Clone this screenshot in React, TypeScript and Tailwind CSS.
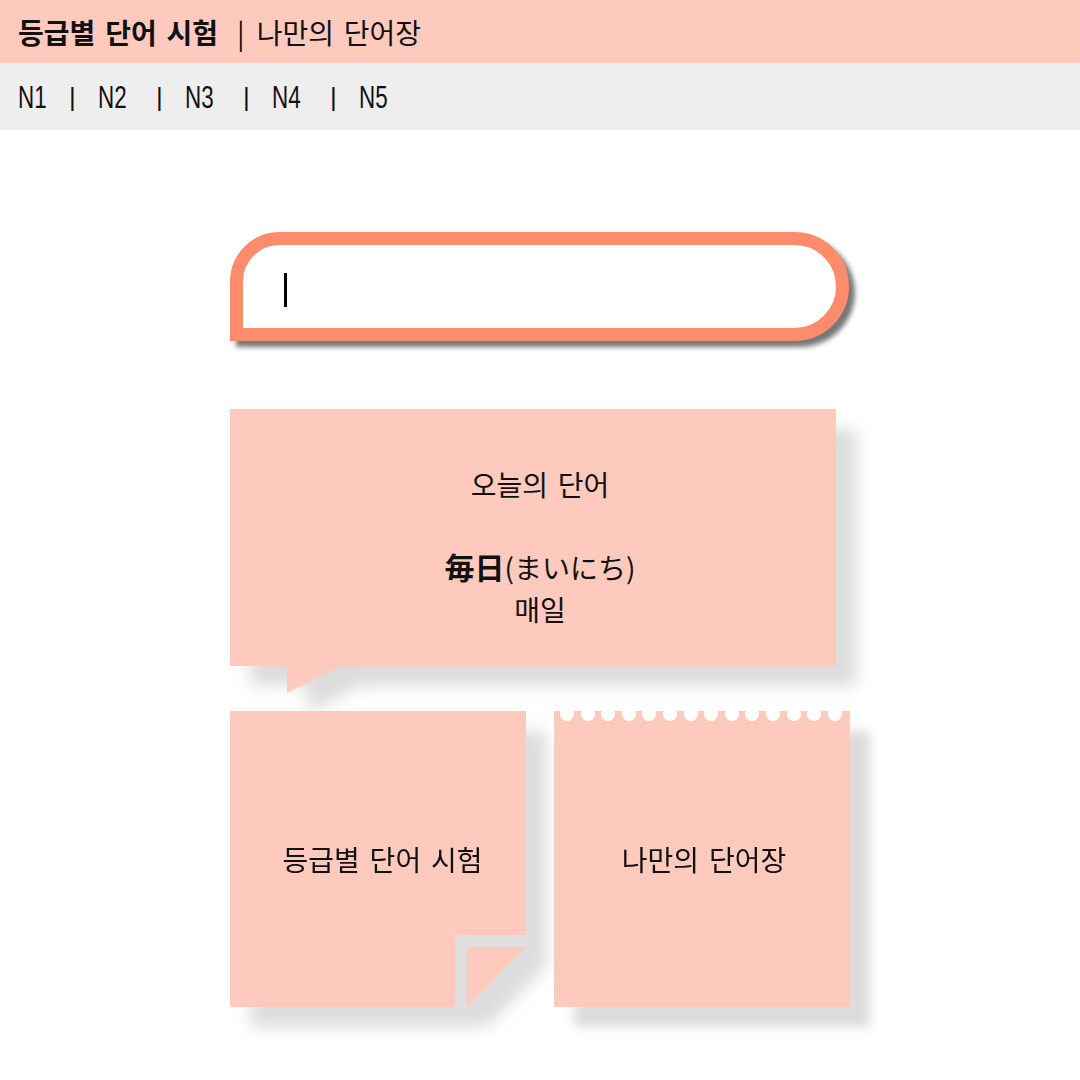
const LEVELS = ["N1", "N2", "N3", "N4", "N5"];

function Scallops() {
  return (
    <div className="absolute left-[6px] -top-[4px] flex gap-[6.6px]">
      {Array.from({ length: 14 }).map((_, i) => (
        <div key={i} className="w-[14px] h-[14px] rounded-full bg-white" />
      ))}
    </div>
  );
}

export default function App() {
  return (
    <div className="min-h-screen bg-white text-[#111] font-['Noto_Sans_CJK_KR','Noto_Sans_CJK_JP',sans-serif] [word-spacing:0.22em]">
      {/* Top menu */}
      <header className="h-[63px] bg-[#fecabd] flex items-center pl-[18px] text-[28px] leading-none">
        <span className="font-bold">등급별 단어 시험</span>
        <span className="ml-[19px] mr-[12px]">|</span>
        <span>나만의 단어장</span>
      </header>

      {/* Level tabs */}
      <nav className="h-[67px] bg-[#eeeeee] flex items-center pl-[18px] text-[32px] leading-none font-['Liberation_Sans',sans-serif] [word-spacing:0]">
        {LEVELS.map((lv, i) => (
          <div key={lv} className="flex items-center">
            {i > 0 && <span className="w-[29px] text-[26px]">|</span>}
            <span className={i === 0 ? "w-[51px]" : i === 4 ? "" : "w-[58px]"}>
              <span className="inline-block origin-left scale-x-[0.7]">{lv}</span>
            </span>
          </div>
        ))}
      </nav>

      <main className="w-[620px] mx-auto flex flex-col">
        {/* Search box */}
        <div className="mt-[102px] w-[619px] h-[109px] border-[13px] border-[#fe8b6b] bg-white rounded-tl-[50px] rounded-r-[55px] rounded-bl-none shadow-[6px_6px_5px_#777777] flex items-start pl-[41px] pt-[28px]">
          <div className="w-[3px] h-[34px] bg-black" />
        </div>

        {/* Word of the day bubble */}
        <div className="mt-[68px] drop-shadow-[20px_20px_8px_#dcdcdc]">
          <div className="relative w-[606px] h-[257px] bg-[#fdcabd] flex flex-col items-center pl-[14px] pt-[54px] text-[28px] leading-[42px]">
            <div>오늘의 단어</div>
            <div className="mt-[40px]">
              <span className="text-[30px] font-bold">毎日</span>
              <span>(まいにち)</span>
            </div>
            <div>매일</div>
            <div className="absolute left-[57px] top-full w-[54px] h-[27px] bg-[#fdcabd] [clip-path:polygon(0_0,100%_0,0_100%)]" />
          </div>
        </div>

        {/* Bottom cards */}
        <div className="mt-[45px] flex gap-[28px]">
          <div className="drop-shadow-[20px_20px_8px_#dcdcdc]">
            <div className="relative w-[296px] h-[296px] bg-[#fdcabd] flex items-center justify-center pl-[9px] text-[28px] [clip-path:polygon(0_0,100%_0,100%_236px,237px_100%,0_100%)]">
              <span>등급별 단어 시험</span>
              <div className="absolute left-[225px] top-[224px] w-[71px] h-[72px] bg-[#dedede]">
                <div className="absolute left-[12px] top-[12px] w-[59px] h-[60px] bg-[#fdcabd] [clip-path:polygon(0_0,100%_0,0_100%)]" />
              </div>
            </div>
          </div>

          <div className="relative w-[296px] h-[296px] bg-[#fdcabd] shadow-[20px_20px_10px_#dcdcdc] flex items-center justify-center pl-[4px] text-[28px]">
            <Scallops />
            <span>나만의 단어장</span>
          </div>
        </div>
      </main>
    </div>
  );
}
